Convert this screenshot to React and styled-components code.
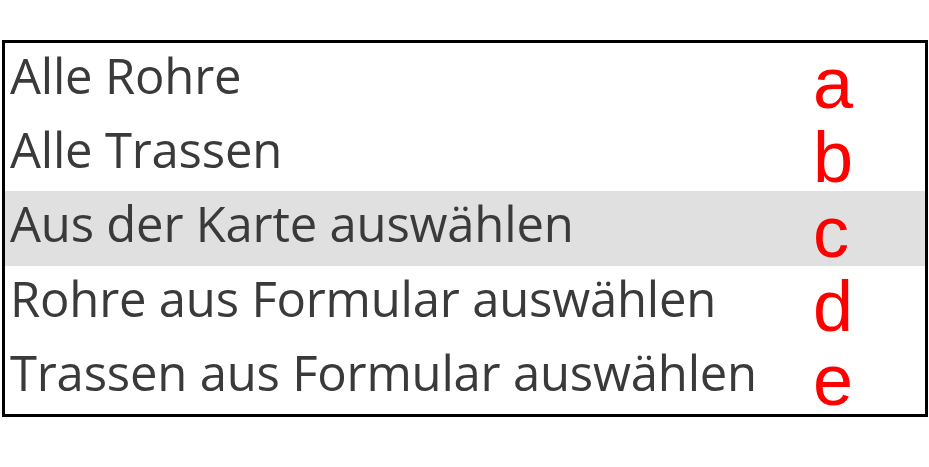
import React from "react";
import styled, { createGlobalStyle } from "styled-components";

const options = [
  { label: "Alle Rohre", mark: "a" },
  { label: "Alle Trassen", mark: "b" },
  { label: "Aus der Karte auswählen", mark: "c", selected: true },
  { label: "Rohre aus Formular auswählen", mark: "d" },
  { label: "Trassen aus Formular auswählen", mark: "e" },
];

const App = () => {
  return (
    <>
      <GlobalStyle />
      <Page>
        <ListBox>
          {options.map((opt) => (
            <Row key={opt.mark} $selected={opt.selected}>
              <Label>{opt.label}</Label>
              <Mark>{opt.mark}</Mark>
            </Row>
          ))}
        </ListBox>
      </Page>
    </>
  );
};

export default App;

/* ================== STYLES ================== */

const GlobalStyle = createGlobalStyle`
  html, body {
    margin: 0;
    padding: 0;
    background: #fff;
  }
`;

const Page = styled.div`
  width: 929px;
  height: 467px;
  padding: 40px 0 0 2px;
  box-sizing: border-box;
`;

const ListBox = styled.div`
  width: 926px;
  height: 377px;
  box-sizing: border-box;
  border: 3px solid #000;
  display: grid;
  grid-template-rows: repeat(5, minmax(0, 1fr));
`;

const Row = styled.div`
  display: flex;
  align-items: center;
  justify-content: space-between;
  padding: 0 0 0 5px;
  background: ${(p) => (p.$selected ? "#e0e0e0" : "transparent")};
`;

const Label = styled.span`
  font-family: "Open Sans", "Noto Sans", sans-serif;
  font-size: 49px;
  color: #3a3a3a;
  line-height: 1;
  margin-top: -9px;
  letter-spacing: -0.2px;
`;

const Mark = styled.span`
  font-family: "Liberation Sans", Arial, sans-serif;
  font-size: 72px;
  color: #ff0000;
  line-height: 1;
  width: 112px;
  margin-top: 6px;
`;
